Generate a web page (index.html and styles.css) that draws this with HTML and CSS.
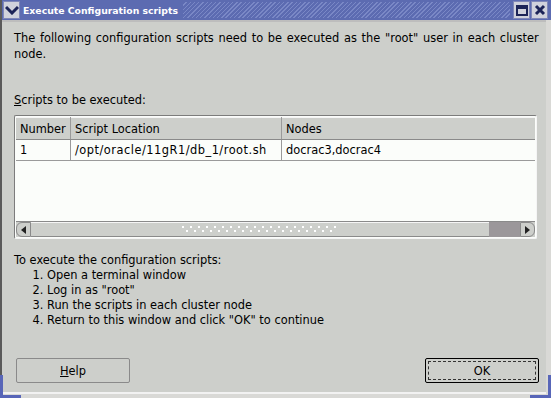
FILE: index.html
```html
<!DOCTYPE html>
<html lang="en">
<head>
    <meta charset="UTF-8">
    <title>Execute Configuration scripts</title>
    <link rel="stylesheet" href="styles.css">
</head>
<body>
    <div class="window">
        <div class="titlebar">
            <span class="tb-btn menu-btn">
                <svg width="14" height="10" viewBox="0 0 14 10"><path d="M1 2 L7 8 L13 2" fill="none" stroke="#1c2458" stroke-width="3"/></svg>
            </span>
            <span class="title">Execute Configuration scripts</span>
            <span class="hatch"></span>
            <span class="tb-btn">
                <svg width="12" height="11" viewBox="0 0 12 11"><rect x="1" y="1" width="10" height="9" fill="none" stroke="#1c2458" stroke-width="2"/><rect x="1" y="1" width="10" height="3" fill="#1c2458"/></svg>
            </span>
            <span class="tb-btn">
                <svg width="12" height="12" viewBox="0 0 12 12"><path d="M2 2 L10 10 M10 2 L2 10" stroke="#1c2458" stroke-width="3"/></svg>
            </span>
        </div>

        <div class="content">
            <p class="intro">The following configuration scripts need to be executed as the "root" user in each cluster<br>node.</p>

            <p class="label"><u>S</u>cripts to be executed:</p>

            <div class="table-box">
                <div class="table-area">
                    <table class="scripts">
                        <thead>
                            <tr>
                                <th class="col-num">Number</th>
                                <th class="col-loc">Script Location</th>
                                <th>Nodes</th>
                            </tr>
                        </thead>
                        <tbody>
                            <tr>
                                <td>1</td>
                                <td class="path">/opt/oracle/11gR1/db_1/root.sh</td>
                                <td>docrac3,docrac4</td>
                            </tr>
                        </tbody>
                    </table>
                </div>
                <div class="scrollbar">
                    <span class="arrow left"><svg width="5" height="8" viewBox="0 0 5 8"><path d="M5 0 L0 4 L5 8 Z" fill="#222"/></svg></span>
                    <span class="thumb"><span class="grip"></span></span>
                    <span class="trough"></span>
                    <span class="arrow right"><svg width="5" height="8" viewBox="0 0 5 8"><path d="M0 0 L5 4 L0 8 Z" fill="#222"/></svg></span>
                </div>
            </div>

            <div class="steps">
                <p>To execute the configuration scripts:</p>
                <ol>
                    <li>Open a terminal window</li>
                    <li>Log in as "root"</li>
                    <li>Run the scripts in each cluster node</li>
                    <li>Return to this window and click "OK" to continue</li>
                </ol>
            </div>

            <div class="buttons">
                <button class="btn"><u>H</u>elp</button>
                <button class="btn default"><span class="focus">OK</span></button>
            </div>
        </div>
    </div>
</body>
</html>
```

FILE: styles.css
```css
body {
    margin: 0;
    padding: 0;
    font-family: 'DejaVu Sans', sans-serif;
    font-size: 11.4px;
    color: #000;
    background-color: #d9d9d6;
}

.window {
    width: 551px;
    height: 398px;
    box-sizing: border-box;
    display: flex;
    flex-direction: column;
    background-color: #d9d9d6;
    border-left: 2px solid #5a5a5a;
    position: relative;
}

.window::before,
.window::after {
    content: "";
    position: absolute;
    bottom: 0;
    width: 18px;
    height: 20px;
    border-bottom: 3px solid #5866b8;
}

.window::before {
    left: -2px;
    border-left: 3px solid #5866b8;
}

.window::after {
    right: 0;
    border-right: 3px solid #5866b8;
}

.titlebar {
    height: 20px;
    display: flex;
    align-items: center;
    background-color: #5c6bb1;
    padding-right: 3px;
    gap: 1px;
}

.tb-btn {
    width: 17px;
    height: 18px;
    background-color: #d0d2dc;
    display: flex;
    align-items: center;
    justify-content: center;
    border: 1px solid #8088b8;
    box-sizing: border-box;
}

.menu-btn {
    margin-left: 1px;
}

.title {
    color: #fff;
    font-weight: bold;
    font-size: 9.3px;
    padding: 0 4px 0 2px;
}

.hatch {
    flex: 1;
    align-self: stretch;
    margin: 2px 2px 2px 0;
    background-image: repeating-linear-gradient(135deg, #5c6bb1 0, #5c6bb1 2px, #7a88c6 2px, #7a88c6 3px);
}

.content {
    flex: 1;
    background-color: #cdcfcb;
    border-top: 2px solid #bdbdbd;
    border-bottom: 2px solid #f2f2f2;
    margin-right: 5px;
    margin-bottom: 4px;
    padding: 8px 7px 0 12px;
    display: flex;
    flex-direction: column;
}

.intro {
    margin: 0;
    line-height: 16px;
    word-spacing: 1.1px;
    white-space: nowrap;
}

.label {
    margin: 31px 0 8px 0;
}

.table-box {
    border: 1px solid #7c7c7c;
    border-right-color: #f5f5f5;
    border-bottom-color: #f5f5f5;
    border-radius: 2px;
    margin-right: 2px;
    background-color: #fbfdfa;
    height: 124px;
    box-sizing: border-box;
    display: flex;
    flex-direction: column;
    padding: 1px;
}

.table-area {
    flex: 1;
}

.scripts {
    border-collapse: collapse;
    width: 100%;
}

.scripts th,
.scripts td {
    text-align: left;
    font-weight: normal;
    padding: 0 4px;
    border-right: 1px solid #9a9a9a;
    white-space: nowrap;
}

.scripts th {
    height: 21px;
    background-color: #cdcfcb;
    border-bottom: 1px solid #8a8a8a;
    border-top: 1px solid #f5f5f5;
}

.scripts td {
    height: 20px;
    border-bottom: 1px solid #9a9a9a;
}

.scripts td.path {
    letter-spacing: 0.5px;
}

.scripts th:last-child,
.scripts td:last-child {
    border-right: none;
}

.col-num {
    width: 46px;
}

.col-loc {
    width: 202px;
}

.scrollbar {
    height: 15px;
    display: flex;
    background-color: #cdcfcb;
    border-top: 1px solid #8a8a8a;
}

.arrow {
    width: 13px;
    display: flex;
    align-items: center;
    justify-content: center;
    border: 1px solid #8a8a8a;
    background-color: #cdcfcb;
}

.arrow.left {
    border-radius: 6px 0 0 6px;
}

.arrow.right {
    border-radius: 0 6px 6px 0;
}

.thumb {
    flex: 1;
    display: flex;
    align-items: center;
    justify-content: center;
    border-top: 1px solid #f5f5f5;
    border-bottom: 1px solid #8a8a8a;
}

.grip {
    width: 156px;
    height: 7px;
    background-image:
        radial-gradient(circle at 1px 1px, #fff 1px, transparent 1.2px),
        radial-gradient(circle at 1px 1px, #fff 1px, transparent 1.2px);
    background-size: 8px 7px, 8px 7px;
    background-position: 0 0, 4px 4px;
}

.trough {
    width: 31px;
    background-color: #9b979a;
}

.steps {
    margin-top: 14px;
    line-height: 15px;
}

.steps p {
    margin: 0;
}

.steps ol {
    margin: 0;
    padding-left: 33px;
}

.buttons {
    margin-top: auto;
    margin-bottom: 9px;
    display: flex;
    justify-content: space-between;
    padding-left: 2px;
}

.btn {
    width: 114px;
    height: 25px;
    font-family: 'DejaVu Sans', sans-serif;
    font-size: 11.4px;
    background-color: #cdcfcb;
    border: 1px solid #8a8a8a;
    border-radius: 2px;
    padding: 0;
}

.btn.default {
    border: 1px solid #000;
    padding: 2px;
}

.btn .focus {
    display: flex;
    align-items: center;
    justify-content: center;
    height: 100%;
    border: 1px dashed #333;
    box-sizing: border-box;
}
```
